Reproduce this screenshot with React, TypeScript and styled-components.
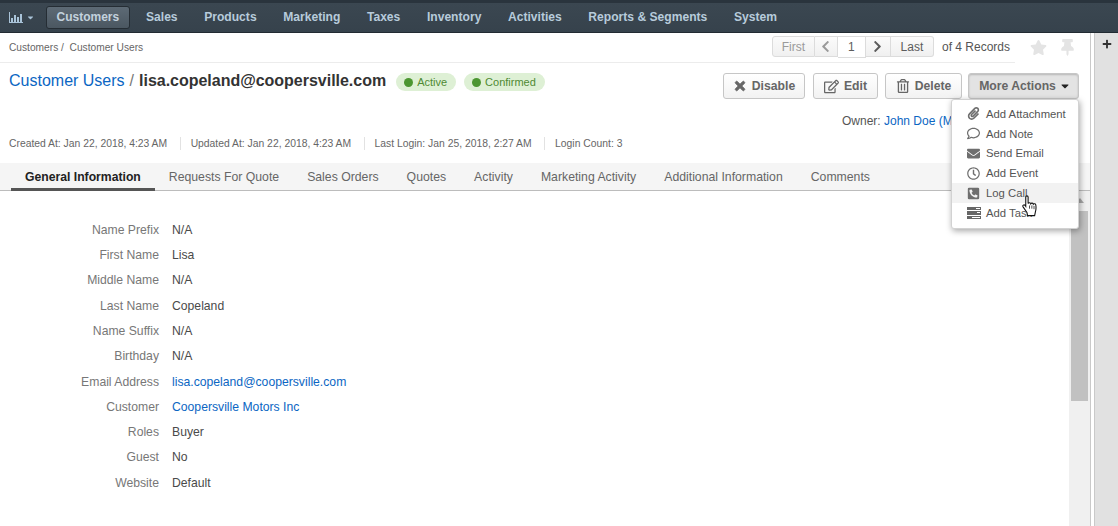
import React from "react";
import styled, { createGlobalStyle } from "styled-components";
import {
  FaCaretDown,
  FaChevronLeft,
  FaChevronRight,
  FaEnvelope,
  FaPaperclip,
  FaPhoneSquareAlt,
  FaPlus,
  FaRegClock,
  FaRegComment,
  FaRegEdit,
  FaRegTrashAlt,
  FaStar,
  FaThumbtack,
  FaTimes,
} from "react-icons/fa";

const GlobalStyle = createGlobalStyle`
  html, body {
    margin: 0;
    padding: 0;
    width: 1118px;
    height: 526px;
    overflow: hidden;
    background: #ffffff;
    font-family: "Liberation Sans", Arial, sans-serif;
    color: #4a4a4a;
  }
  * { box-sizing: border-box; }
`;

const Page = styled.div`
  position: relative;
  width: 1118px;
  height: 526px;
  display: flex;
  flex-direction: column;
  overflow: hidden;
`;

const TopBar = styled.nav`
  height: 33px;
  flex: none;
  display: flex;
  align-items: center;
  padding: 3px 0 0 9px;
  background: linear-gradient(#2a343d 0, #2a343d 3px, #3b4751 3px, #36424c 100%);
  border-bottom: 1px solid #222b32;
`;

const ChartMenu = styled.span`
  width: 37px;
  display: flex;
  align-items: center;
  gap: 3px;
  color: #a9c3d8;
`;

const NavItem = styled.a<{ $active?: boolean }>`
  height: 23px;
  display: flex;
  align-items: center;
  margin-right: ${(p) => (p.$active ? "3px" : "0")};
  padding: 0 ${(p) => (p.$active ? "9.5px" : "13.3px")} 2px;
  font-size: ${(p) => (p.$active ? "12px" : "12.1px")};
  font-weight: 700;
  color: ${(p) => (p.$active ? "#c3d2de" : "#b7cbdb")};
  background: ${(p) => (p.$active ? "linear-gradient(#5d6a75, #4b5761)" : "none")};
  border: ${(p) => (p.$active ? "1px solid #252d34" : "none")};
  border-radius: 3px;
`;

const Body = styled.div`
  flex: 1;
  display: flex;
  min-height: 0;
`;

const Main = styled.main`
  width: 1090px;
  flex: none;
  display: flex;
  flex-direction: column;
`;

const Gutter = styled.div`
  width: 5px;
  flex: none;
  background: #ffffff;
  border-left: 1px solid #c9c9c9;
  border-right: 1px solid #c9c9c9;
`;

const SideRail = styled.aside`
  flex: 1;
  display: flex;
  justify-content: center;
  padding-top: 6px;
  background: #e1e1e1;
  color: #333333;
`;

const TopRow = styled.div`
  height: 30px;
  flex: none;
  display: flex;
  align-items: center;
`;

const BreadcrumbRow = styled.div`
  width: 1015px;
  height: 30px;
  flex: none;
  display: flex;
  align-items: center;
  justify-content: space-between;
  padding: 0 5px 1px 9px;
  border-bottom: 1px solid #ececec;
`;

const Breadcrumb = styled.div`
  font-size: 10.2px;
  color: #666666;
`;

const Pager = styled.div`
  display: flex;
  align-items: center;
  height: 21px;
  margin-bottom: 1px;
`;

const PagerButton = styled.span<{ $width: number; $disabled?: boolean; $current?: boolean }>`
  width: ${(p) => p.$width}px;
  height: ${(p) => (p.$current ? "22px" : "21px")};
  display: flex;
  align-items: center;
  justify-content: center;
  align-self: flex-start;
  font-size: 12px;
  color: ${(p) => (p.$disabled ? "#9a9a9a" : "#5c5c5c")};
  background: ${(p) => (p.$current ? "#ffffff" : "linear-gradient(#fbfbfb, #f0f0f0)")};
  border: 1px solid #dcdcdc;
  border-left-width: 0;
  &:first-child {
    border-left-width: 1px;
    border-radius: 3px 0 0 3px;
  }
  &:nth-child(5) {
    border-radius: 0 3px 3px 0;
  }
`;

const PagerCount = styled.span`
  margin-left: 8px;
  font-size: 12px;
  color: #555555;
`;

const CornerIcons = styled.div`
  display: flex;
  gap: 12px;
  margin: 0 0 2px 15px;
  color: #e4e4e4;
  font-size: 17px;
`;

const HeaderRow = styled.div`
  height: 38px;
  flex: none;
  display: flex;
  align-items: flex-start;
  justify-content: space-between;
  padding: 10px 11px 0 9px;
`;

const TitleGroup = styled.div`
  display: flex;
  align-items: center;
  height: 15px;
`;

const TitleLink = styled.a`
  font-size: 16px;
  color: #0b66c3;
`;

const TitleSep = styled.span`
  margin: 0 5px;
  font-size: 16px;
  color: #777777;
`;

const TitleName = styled.h1`
  margin: 0;
  font-size: 16px;
  font-weight: 700;
  letter-spacing: -0.02px;
  color: #333333;
`;

const Badge = styled.span`
  height: 18px;
  margin: 3px 0 0 8px;
  display: flex;
  align-items: center;
  gap: 4px;
  padding: 0 9px 0 8px;
  border-radius: 9px;
  background: #def0d5;
  font-size: 11px;
  color: #4f8a33;
  ${TitleName} + & {
    margin-left: 10px;
  }
`;

const BadgeDot = styled.i`
  width: 9px;
  height: 9px;
  border-radius: 50%;
  background: #4c9631;
`;

const Actions = styled.div`
  display: flex;
  gap: 7px;
`;

const ActionButton = styled.button<{ $open?: boolean; $width: number }>`
  width: ${(p) => p.$width}px;
  height: 26px;
  display: flex;
  align-items: center;
  justify-content: center;
  gap: ${(p) => (p.$open ? "3px" : "5px")};
  padding: 0 0 0 ${(p) => (p.$open ? "3px" : "0")};
  font-family: inherit;
  font-size: 12.2px;
  font-weight: 700;
  color: #666666;
  background: ${(p) => (p.$open ? "#e3e3e3" : "linear-gradient(#ffffff, #f2f2f2)")};
  border: 1px solid #c6c6c6;
  border-radius: 3px;
  box-shadow: ${(p) => (p.$open ? "inset 0 1px 2px rgba(0,0,0,0.2)" : "none")};
  &:first-child {
    margin-right: 1px;
  }
  &:nth-child(3) {
    margin-right: -1px;
  }
`;

const OwnerRow = styled.div`
  height: 26px;
  flex: none;
  padding: 13px 0 0 842px;
  font-size: 12px;
  color: #555555;
  white-space: nowrap;
`;

const InlineLink = styled.a`
  color: #0b66c3;
`;

const MetaRow = styled.div`
  height: 29px;
  flex: none;
  display: flex;
  align-items: center;
  padding: 3px 0 0 9px;
`;

const MetaItem = styled.span`
  padding-right: 12.5px;
  margin-right: 10px;
  font-size: 10.35px;
  color: #666666;
  line-height: 13px;
  border-right: 1px solid #e2e2e2;
  &:last-child {
    border-right: none;
  }
`;

const Tabs = styled.div`
  height: 28px;
  flex: none;
  display: flex;
  padding: 0 0 0 11px;
  margin-top: 7px;
  background: #f5f5f5;
  border-bottom: 1px solid #bcbcbc;
`;

const Tab = styled.a<{ $active?: boolean }>`
  height: 28px;
  display: flex;
  align-items: center;
  padding: ${(p) => (p.$active ? "3px" : "0")} 14px 0;
  font-size: ${(p) => (p.$active ? "12.2px" : "12.25px")};
  font-weight: ${(p) => (p.$active ? 700 : 400)};
  color: ${(p) => (p.$active ? "#222222" : "#666666")};
  border-bottom: ${(p) => (p.$active ? "3px solid #555555" : "none")};
`;

const ContentArea = styled.section`
  flex: 1;
  display: flex;
  min-height: 0;
`;

const Fields = styled.dl`
  flex: 1;
  margin: 0;
  padding-top: 26.1px;
`;

const FieldRow = styled.div`
  height: 25.3px;
  display: flex;
  align-items: center;
  font-size: 12.2px;
`;

const FieldLabel = styled.dt`
  width: 159px;
  text-align: right;
  color: #777777;
`;

const FieldValue = styled.dd`
  margin: 0 0 0 13px;
  color: #4a4a4a;
`;

const ScrollTrack = styled.div`
  width: 21px;
  flex: none;
  display: flex;
  flex-direction: column;
  align-items: center;
  background: #f0f0f0;
`;

const ScrollUp = styled.i`
  width: 0;
  height: 0;
  margin: 7px 0 8px;
  border-left: 4px solid transparent;
  border-right: 4px solid transparent;
  border-bottom: 5px solid #a8a8a8;
`;

const ScrollThumb = styled.div`
  width: 17px;
  height: 190px;
  background: #c1c1c1;
`;

const Dropdown = styled.ul`
  position: absolute;
  left: 951px;
  top: 99px;
  width: 128px;
  height: 130px;
  margin: 0;
  padding: 4px 0;
  list-style: none;
  background: #ffffff;
  border: 1px solid #d2d2d2;
  border-radius: 3px;
  box-shadow: 1px 2px 6px rgba(0, 0, 0, 0.35);
`;

const DropdownItem = styled.li<{ $hover?: boolean }>`
  height: 19.8px;
  display: flex;
  align-items: center;
  padding-left: 15px;
  font-size: 11.3px;
  color: #555555;
  background: ${(p) => (p.$hover ? "#f2f2f2" : "transparent")};
`;

const ItemIcon = styled.span`
  width: 19px;
  display: flex;
  color: #6e6e6e;
  font-size: 13px;
`;

const HandCursor = styled.svg`
  position: absolute;
  left: 1022px;
  top: 195px;
`;

const fields: { label: string; value: string; link?: boolean }[] = [
  { label: "Name Prefix", value: "N/A" },
  { label: "First Name", value: "Lisa" },
  { label: "Middle Name", value: "N/A" },
  { label: "Last Name", value: "Copeland" },
  { label: "Name Suffix", value: "N/A" },
  { label: "Birthday", value: "N/A" },
  { label: "Email Address", value: "lisa.copeland@coopersville.com", link: true },
  { label: "Customer", value: "Coopersville Motors Inc", link: true },
  { label: "Roles", value: "Buyer" },
  { label: "Guest", value: "No" },
  { label: "Website", value: "Default" },
];

const navItems = ["Sales", "Products", "Marketing", "Taxes", "Inventory", "Activities", "Reports & Segments", "System"];
const tabs = ["Requests For Quote", "Sales Orders", "Quotes", "Activity", "Marketing Activity", "Additional Information", "Comments"];

const ChartIcon = () => (
  <svg width="14" height="12" viewBox="0 0 14 12" fill="#a9c3d8">
    <rect x="0" y="0" width="1" height="11" />
    <rect x="0" y="10" width="14" height="1" />
    <rect x="2" y="6" width="2" height="4" />
    <rect x="5" y="3" width="2" height="7" />
    <rect x="8" y="5" width="2" height="5" />
    <rect x="11" y="2" width="2" height="8" />
  </svg>
);

const TaskIcon = () => (
  <svg width="14" height="12" viewBox="0 0 14 12" fill="#666666">
    <rect x="0" y="0" width="14" height="3" />
    <rect x="0" y="4" width="14" height="4" />
    <rect x="0" y="9" width="14" height="3" />
    <rect x="9" y="1" width="4" height="1" fill="#ffffff" />
    <rect x="10" y="5" width="3" height="1" fill="#ffffff" />
    <rect x="5" y="10" width="8" height="1" fill="#ffffff" />
  </svg>
);

const App = () => (
  <Page>
    <GlobalStyle />
    <TopBar>
      <ChartMenu>
        <ChartIcon />
        <FaCaretDown size={9} />
      </ChartMenu>
      <NavItem $active>Customers</NavItem>
      {navItems.map((item) => (
        <NavItem key={item}>{item}</NavItem>
      ))}
    </TopBar>
    <Body>
      <Main>
        <TopRow>
          <BreadcrumbRow>
            <Breadcrumb>Customers /&nbsp; Customer Users</Breadcrumb>
            <Pager>
              <PagerButton $width={43} $disabled>First</PagerButton>
              <PagerButton $width={23} $disabled><FaChevronLeft size={13} /></PagerButton>
              <PagerButton $width={28} $current>1</PagerButton>
              <PagerButton $width={25}><FaChevronRight size={13} /></PagerButton>
              <PagerButton $width={43}>Last</PagerButton>
              <PagerCount>of 4 Records</PagerCount>
            </Pager>
          </BreadcrumbRow>
          <CornerIcons>
            <FaStar />
            <FaThumbtack />
          </CornerIcons>
        </TopRow>
        <HeaderRow>
          <TitleGroup>
            <TitleLink>Customer Users</TitleLink>
            <TitleSep>/</TitleSep>
            <TitleName>lisa.copeland@coopersville.com</TitleName>
            <Badge><BadgeDot />Active</Badge>
            <Badge><BadgeDot />Confirmed</Badge>
          </TitleGroup>
          <Actions>
            <ActionButton $width={82}><FaTimes size={14} stroke="currentColor" strokeWidth={30} />Disable</ActionButton>
            <ActionButton $width={65}><FaRegEdit size={15} />Edit</ActionButton>
            <ActionButton $width={77}><FaRegTrashAlt size={14} />Delete</ActionButton>
            <ActionButton $width={111} $open>More Actions<FaCaretDown size={12} color="#222" /></ActionButton>
          </Actions>
        </HeaderRow>
        <OwnerRow>
          Owner: <InlineLink>John Doe (M</InlineLink>
        </OwnerRow>
        <MetaRow>
          <MetaItem>Created At: Jan 22, 2018, 4:23 AM</MetaItem>
          <MetaItem>Updated At: Jan 22, 2018, 4:23 AM</MetaItem>
          <MetaItem>Last Login: Jan 25, 2018, 2:27 AM</MetaItem>
          <MetaItem>Login Count: 3</MetaItem>
        </MetaRow>
        <Tabs>
          <Tab $active>General Information</Tab>
          {tabs.map((tab) => (
            <Tab key={tab}>{tab}</Tab>
          ))}
        </Tabs>
        <ContentArea>
          <Fields>
            {fields.map((f) => (
              <FieldRow key={f.label}>
                <FieldLabel>{f.label}</FieldLabel>
                <FieldValue>{f.link ? <InlineLink>{f.value}</InlineLink> : f.value}</FieldValue>
              </FieldRow>
            ))}
          </Fields>
          <ScrollTrack>
            <ScrollUp />
            <ScrollThumb />
          </ScrollTrack>
        </ContentArea>
      </Main>
      <Gutter />
      <SideRail>
        <FaPlus size={10} />
      </SideRail>
    </Body>
    <Dropdown>
      <DropdownItem><ItemIcon><FaPaperclip /></ItemIcon>Add Attachment</DropdownItem>
      <DropdownItem><ItemIcon><FaRegComment /></ItemIcon>Add Note</DropdownItem>
      <DropdownItem><ItemIcon><FaEnvelope /></ItemIcon>Send Email</DropdownItem>
      <DropdownItem><ItemIcon><FaRegClock /></ItemIcon>Add Event</DropdownItem>
      <DropdownItem $hover><ItemIcon><FaPhoneSquareAlt /></ItemIcon>Log Call</DropdownItem>
      <DropdownItem><ItemIcon><TaskIcon /></ItemIcon>Add Task</DropdownItem>
    </Dropdown>
    <HandCursor width="15" height="22" viewBox="0 0 14 20">
      <path
        d="M3.5 1.5c0-1.3 2.2-1.3 2.2 0v6.2c.3-1 2.3-1 2.5.2.4-.9 2.3-.8 2.4.4.5-.7 2.2-.5 2.3.8.3 2 .2 4.5-.4 6.3l-.7 3.6H5.2L4.6 16 1 10.8c-.8-1.3.8-2.5 1.9-1.3l.6.8V1.5z"
        fill="#ffffff"
        stroke="#111111"
        strokeWidth="1"
      />
      <path d="M7 9.5v3M9.2 9.5v3M11.2 10v3" stroke="#111111" strokeWidth="0.7" />
    </HandCursor>
  </Page>
);

export default App;
